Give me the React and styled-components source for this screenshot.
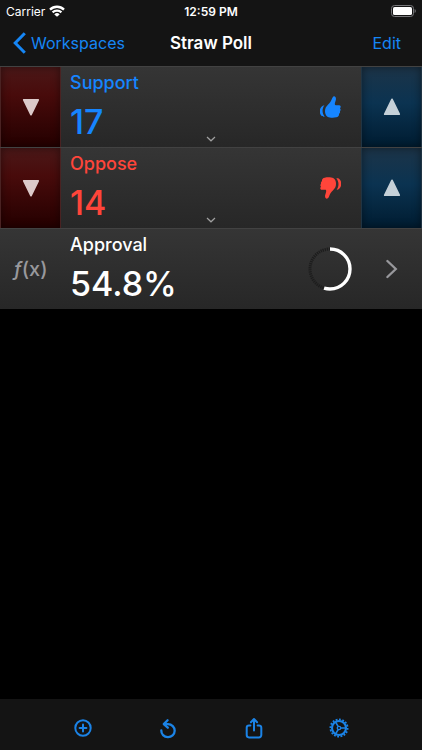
import styled, { createGlobalStyle } from "styled-components"
import { useState } from "react";

const GlobalStyle = createGlobalStyle`
    * {
        box-sizing: border-box;
    }
    body {
        margin: 0;
        background: #000;
        color: #fff;
        font-family: Inter, "Liberation Sans", sans-serif;
    }
    button {
        padding: 0;
        border: none;
        background: none;
        color: inherit;
        font: inherit;
        cursor: pointer;
    }
    svg {
        display: block;
    }
`;

const Container = styled.div`
    min-height: 100vh;
    display: flex;
    flex-direction: column;
`;

const Header = styled.header`
    height: 66px;
    background: #141414;
`;

const StatusBar = styled.div`
    height: 22px;
    padding: 0 6px;
    display: grid;
    grid-template-columns: 1fr auto 1fr;
    align-items: center;
    font-size: 12px;
`;

const Carrier = styled.div`
    display: flex;
    align-items: center;
    gap: 4px;
`;

const Time = styled.span`
    font-weight: 600;
`;

const Battery = styled.div`
    justify-self: end;
`;

const NavBar = styled.nav`
    height: 42px;
    padding: 0 13px;
    display: grid;
    grid-template-columns: 1fr auto 1fr;
    align-items: center;
    font-size: 16px;
`;

const BackLink = styled.a`
    display: flex;
    align-items: center;
    gap: 5px;
    color: #1686f5;
    text-decoration: none;
`;

const Title = styled.h1`
    margin: 0;
    font-size: 17px;
    font-weight: 600;
`;

const EditButton = styled.button`
    justify-self: end;
    && {
        padding: 0 8px;
        color: #1686f5;
    }
`;

const List = styled.ul`
    flex: 1;
    margin: 0;
    padding: 0;
    list-style: none;
`;

const Row = styled.li`
    position: relative;
    height: 81px;
    display: grid;
    grid-template-columns: 61px 1fr 61px;
    border-top: 1px solid #424242;
    background: linear-gradient(#353535, #272727);
`;

const StepButton = styled.button`
    && {
        display: flex;
        align-items: center;
        justify-content: center;
        border: 1px solid ${(props) => (props.$up ? "#203443" : "#4a2222")};
        border-top: none;
        border-bottom: none;
        background: ${(props) => (props.$up
            ? "linear-gradient(#1c3448, #0b3351 45%, #001c31)"
            : "linear-gradient(#4b1818, #480b0b 35%, #240000)")};
        box-shadow: inset 0 0 8px rgba(0, 0, 0, 0.45);
    }
`;

const Content = styled.div`
    padding: 0 20px 0 9px;
    display: flex;
    align-items: center;
    justify-content: space-between;
    color: ${(props) => props.$color};
`;

const Name = styled.div`
    font-size: 18px;
    font-weight: 500;
    line-height: 30px;
`;

const Value = styled.div`
    font-size: 34px;
    font-weight: 500;
    line-height: 48px;
`;

const Expand = styled.button`
    position: absolute;
    left: 50%;
    bottom: 5px;
    transform: translateX(-50%);
`;

const FormulaLabel = styled.div`
    display: flex;
    align-items: center;
    justify-content: center;
    color: #98989c;
    font-size: 20px;
    font-weight: 500;
`;

const RingBox = styled.div`
    margin-right: -11px;
`;

const DetailLink = styled.a`
    display: flex;
    align-items: center;
    justify-content: center;
`;

const Toolbar = styled.footer`
    height: 51px;
    padding: 6px 40px 0;
    display: grid;
    grid-template-columns: repeat(4, 1fr);
    background: #141414;
`;

const ToolButton = styled.button`
    && {
        display: flex;
        align-items: center;
        justify-content: center;
        color: #1b83e6;
    }
`;

const WifiIcon = () => (
    <svg width="16" height="12" viewBox="0 0 16 12" fill="none" stroke="#fff" strokeWidth="2.3">
        <path d="M1 4.6a10 10 0 0 1 14 0" />
        <path d="M3.6 7.4a6.2 6.2 0 0 1 8.8 0" />
        <path d="M8 11.8 5.3 9.4a3.8 3.8 0 0 1 5.4 0z" fill="#fff" stroke="none" />
    </svg>
)

const BatteryIcon = () => (
    <svg width="25" height="12" viewBox="0 0 25 12">
        <rect x="0.5" y="0.5" width="22" height="11" rx="3" fill="none" stroke="#77777a" />
        <rect x="2" y="2" width="19" height="8" rx="1.6" fill="#fff" />
        <path d="M23.6 4v4q1.2-.5 1.2-2t-1.2-2z" fill="#77777a" />
    </svg>
)

const Triangle = ({ up }) => (
    <svg width="18" height="18" viewBox="0 0 18 18">
        <path
            d={up ? "M9 1.4 16.2 16.2H1.8z" : "M9 16.6 1.8 1.8h14.4z"}
            fill={up ? "#c5d0d8" : "#dccaca"}
            stroke={up ? "#c5d0d8" : "#dccaca"}
            strokeWidth="1.8"
            strokeLinejoin="round"
        />
    </svg>
)

const Thumb = ({ down }) => (
    <svg width="21" height="22" viewBox="0 0 62 65" fill="currentColor">
        <g transform={down ? "rotate(180 31 32.5)" : undefined}>
            <path d="M39 2c4-3 9 1 8 8-1 6-4 11-3 15 0 2 2 2 4 2h9c4 0 6 6 2 9 3 3 2 7 0 9 1 3 0 6-3 8 1 5-2 9-8 10-10 2-20 1-26-2-8-5-9-18-5-27 4-7 10-11 14-17 4-6 4-12 8-15z" />
            <path d="M13 27C-2 29-5 51 5 59c2 2 6 2 9 2-8-9-9-23-1-34z" />
        </g>
    </svg>
)

const Ring = ({ percent }) => (
    <svg width="44" height="44" viewBox="0 0 44 44" fill="none">
        <circle cx="22" cy="22" r="20" stroke="#1d1d1d" strokeWidth="3" strokeDasharray="1.3 0.8" />
        <circle
            cx="22"
            cy="22"
            r="20"
            stroke="#fff"
            strokeWidth="3.4"
            pathLength="100"
            strokeDasharray={`${percent} 100`}
            transform="rotate(-90 22 22)"
        />
    </svg>
)

const AddIcon = () => (
    <svg width="18" height="18" viewBox="0 0 18 18" fill="none" stroke="currentColor" strokeWidth="2" strokeLinecap="round">
        <circle cx="9" cy="9" r="7.7" />
        <path d="M9 5.6v6.8M5.6 9h6.8" />
    </svg>
)

const ResetIcon = () => (
    <svg width="18" height="22" viewBox="0 0 18 22" fill="none" stroke="currentColor" strokeWidth="2.3" strokeLinecap="round" strokeLinejoin="round">
        <path d="M2.3 13.4a6.7 6.5 0 1 0 6.7-6.2H5.6" />
        <path d="M8.6 3.2 4.8 7.1l4 3.6" />
    </svg>
)

const ShareIcon = () => (
    <svg width="18" height="22" viewBox="0 0 18 22" fill="none" stroke="currentColor" strokeWidth="2" strokeLinecap="round" strokeLinejoin="round">
        <path d="M5.4 8.4H4a2.3 2.3 0 0 0-2.3 2.3v7.4A2.3 2.3 0 0 0 4 20.4h10a2.3 2.3 0 0 0 2.3-2.3v-7.4A2.3 2.3 0 0 0 14 8.4h-1.4" />
        <path d="M9 13.6V2.4M5.9 5.2 9 2l3.1 3.2" />
    </svg>
)

const GearIcon = () => (
    <svg width="20" height="20" viewBox="0 0 20 20" fill="none" stroke="currentColor">
        <circle cx="10" cy="10" r="8.6" strokeWidth="1.8" pathLength="64" strokeDasharray="2.2 1.8" />
        <circle cx="10" cy="10" r="7" strokeWidth="2.1" />
        <circle cx="10" cy="10" r="1.7" strokeWidth="1.3" />
        <path d="M11.8 10h5M9.1 8.4 6.6 4.1M9.1 11.6l-2.5 4.3" strokeWidth="1.6" />
    </svg>
)

export default function App() {
    const [support, setSupport] = useState(17);
    const [oppose, setOppose] = useState(14);

    const counters = [
        { name: "Support", value: support, set: setSupport, color: "#1685ff" },
        { name: "Oppose", value: oppose, set: setOppose, color: "#ff453a", down: true },
    ]
    const total = support + oppose
    const approval = total > 0 ? (support / total) * 100 : 0

  return (
    <Container>
        <GlobalStyle/>
        <Header>
            <StatusBar>
                <Carrier>Carrier <WifiIcon/></Carrier>
                <Time>12:59 PM</Time>
                <Battery><BatteryIcon/></Battery>
            </StatusBar>
            <NavBar>
                <BackLink href="#workspaces">
                    <svg width="13" height="22" viewBox="0 0 13 22" fill="none" stroke="currentColor" strokeWidth="3">
                        <path d="M11.8 1.2 2.2 11l9.6 9.8" />
                    </svg>
                    Workspaces
                </BackLink>
                <Title>Straw Poll</Title>
                <EditButton>Edit</EditButton>
            </NavBar>
        </Header>
        <List>
            {counters.map((item) => (
                <Row key={item.name}>
                    <StepButton aria-label={`Decrease ${item.name}`} onClick={() => item.set(Math.max(0, item.value - 1))}>
                        <Triangle/>
                    </StepButton>
                    <Content $color={item.color}>
                        <div>
                            <Name>{item.name}</Name>
                            <Value>{item.value}</Value>
                        </div>
                        <Thumb down={item.down}/>
                    </Content>
                    <StepButton $up aria-label={`Increase ${item.name}`} onClick={() => item.set(item.value + 1)}>
                        <Triangle up/>
                    </StepButton>
                    <Expand aria-label={`Expand ${item.name}`}>
                        <svg width="10" height="6" viewBox="0 0 10 6" fill="none" stroke="#a0a0a0" strokeWidth="1.2">
                            <path d="M1 1l4 3.8L9 1" />
                        </svg>
                    </Expand>
                </Row>
            ))}
            <Row>
                <FormulaLabel><i>ƒ</i>(x)</FormulaLabel>
                <Content $color="#fff">
                    <div>
                        <Name>Approval</Name>
                        <Value>{approval.toFixed(1)}%</Value>
                    </div>
                    <RingBox><Ring percent={approval}/></RingBox>
                </Content>
                <DetailLink href="#approval" aria-label="Approval details">
                    <svg width="12" height="20" viewBox="0 0 12 20" fill="none" stroke="#98989c" strokeWidth="2.3" strokeLinecap="round">
                        <path d="M1.4 2l8.4 8-8.4 8" />
                    </svg>
                </DetailLink>
            </Row>
        </List>
        <Toolbar>
            <ToolButton aria-label="Add"><AddIcon/></ToolButton>
            <ToolButton aria-label="Reset"><ResetIcon/></ToolButton>
            <ToolButton aria-label="Share"><ShareIcon/></ToolButton>
            <ToolButton aria-label="Settings"><GearIcon/></ToolButton>
        </Toolbar>
    </Container>
  )
}
